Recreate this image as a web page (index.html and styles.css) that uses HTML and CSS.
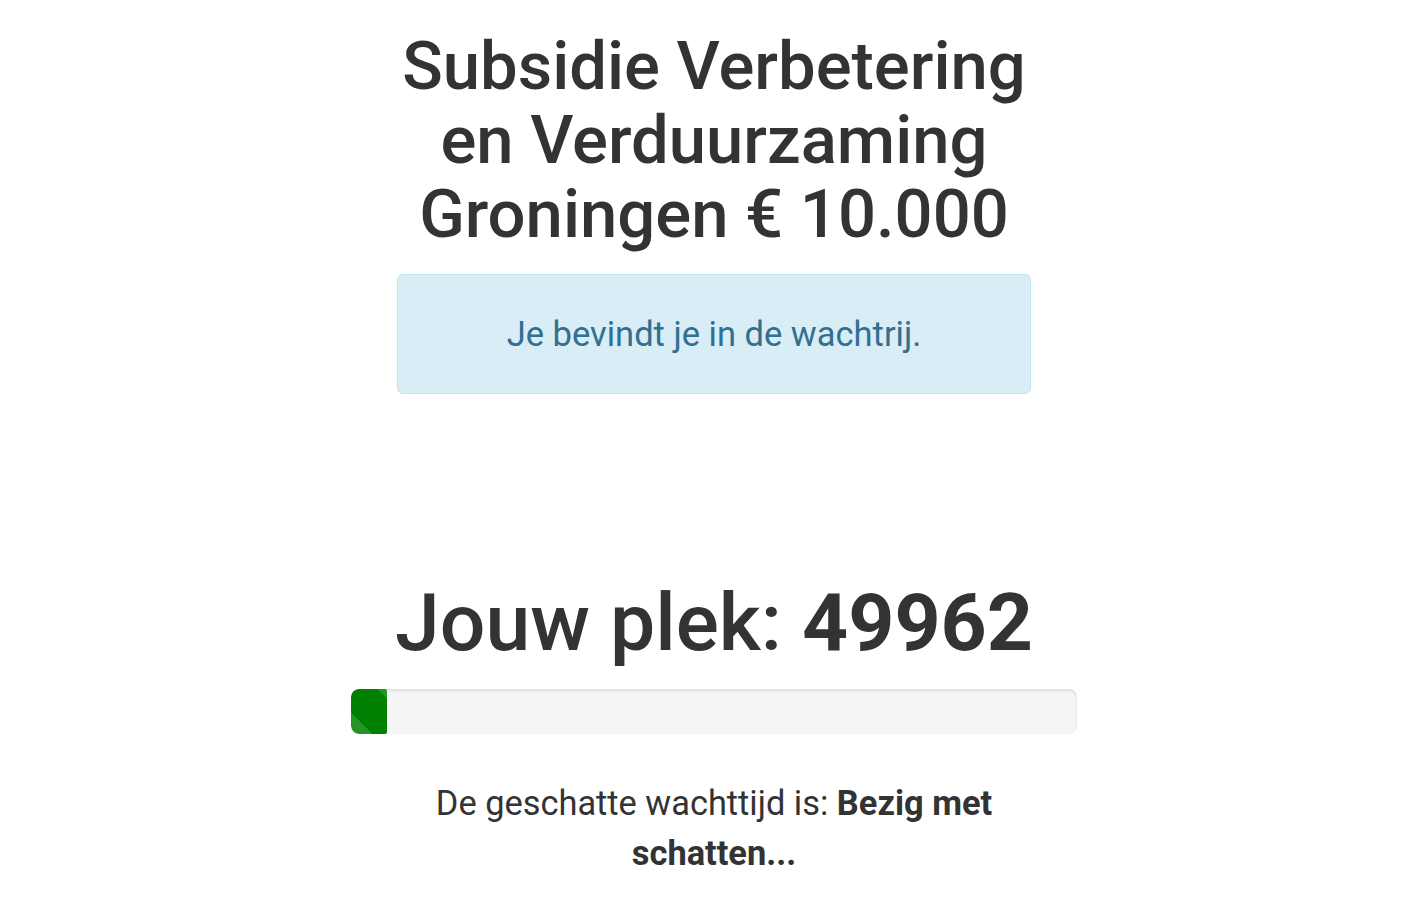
FILE: index.html
```html
<!DOCTYPE html>
<html lang="nl">
<head>
<meta charset="utf-8">
<title>Wachtrij</title>
<link rel="stylesheet" href="styles.css">
</head>
<body>
<main class="page">
  <section class="top">
    <h1 class="title">Subsidie Verbetering en Verduurzaming Groningen € 10.000</h1>
    <div class="alert">Je bevindt je in de wachtrij.</div>
  </section>
  <section class="queue">
    <h2 class="place">Jouw plek: <strong>49962</strong></h2>
    <div class="progress"><div class="bar" style="width:5%"></div></div>
    <p class="wait">De geschatte wachttijd is: <strong>Bezig met schatten...</strong></p>
  </section>
</main>
</body>
</html>
```

FILE: styles.css
```css
* { box-sizing: border-box; }
html, body { margin: 0; padding: 0; background: #fff; }
body {
  font-family: Roboto, "Noto Sans", "Liberation Sans", sans-serif;
  color: #333;
}
.page {
  display: flex;
  flex-direction: column;
  align-items: center;
  padding-left: 14px;
}
.top {
  width: 634px;
  display: flex;
  flex-direction: column;
  align-items: stretch;
  padding-top: 29px;
}
.title {
  margin: 0;
  text-align: center;
  font-size: 67px;
  line-height: 74px;
  font-weight: 500;
  color: #333;
}
.alert {
  margin-top: 23px;
  height: 120px;
  display: flex;
  align-items: center;
  justify-content: center;
  background: #d9edf7;
  border: 1px solid #bce8f1;
  border-radius: 6px;
  color: #31708f;
  font-size: 34.5px;
}
.queue {
  width: 726px;
  display: flex;
  flex-direction: column;
  align-items: center;
  margin-top: 184px;
}
.place {
  margin: 0;
  font-size: 80.5px;
  line-height: 90px;
  font-weight: 500;
  color: #333;
}
.place strong { font-weight: 700; }
.progress {
  align-self: stretch;
  margin-top: 21px;
  height: 45px;
  background: #f5f5f5;
  border-radius: 8px;
  box-shadow: inset 0 2px 3px rgba(0,0,0,0.1);
  overflow: hidden;
}
.bar {
  height: 100%;
  background-color: #008000;
  background-image: linear-gradient(45deg, rgba(255,255,255,.15) 26%, transparent 26%, transparent 88%, rgba(255,255,255,.15) 88%);
  border-radius: 8px 2px 2px 8px;
}
.wait {
  width: 620px;
  margin: 44px 0 0;
  text-align: center;
  font-size: 34.4px;
  line-height: 50px;
  color: #333;
}
.wait strong { font-weight: 700; }
```
